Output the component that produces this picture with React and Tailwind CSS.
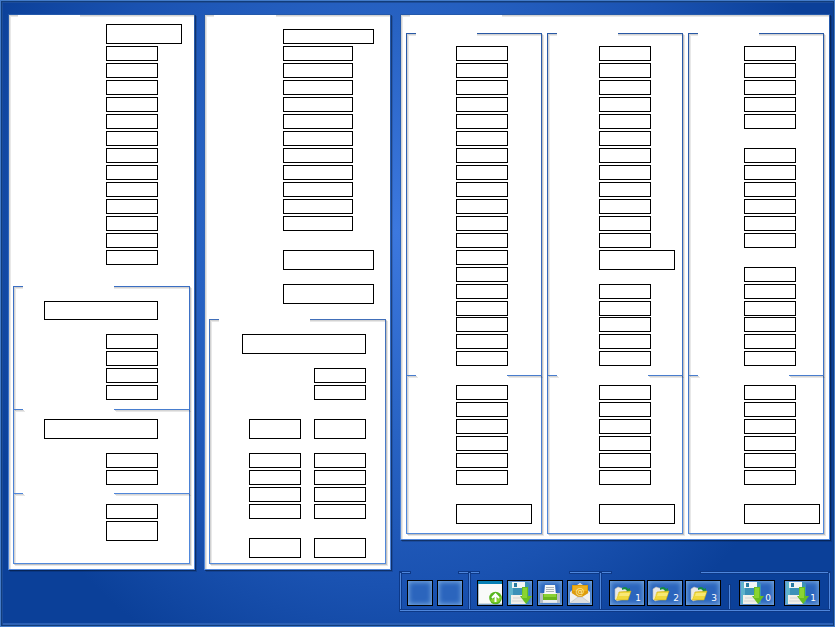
import React from "react";

const box = "shrink-0 border border-black bg-white";

function Field({ className }) {
  return <div className={`${box} ${className}`} />;
}

function Fields({ n, className = "", size = "w-[52px]" }) {
  return (
    <div className={`flex flex-col gap-[2px] ${className}`}>
      {Array.from({ length: n }, (_, i) => (
        <div key={i} className={`${box} h-[15px] ${size}`} />
      ))}
    </div>
  );
}

function Panel({ className, notch, children }) {
  return (
    <section
      className={`relative shrink-0 bg-linear-to-b from-[#2459ab] via-[#2e68c2] to-[#5087dc] p-px shadow-[1px_1px_0_#00000055,2px_2px_0_#00000022] ${className}`}
    >
      <div className="h-full bg-white shadow-[inset_1px_1px_0_#d2d2d2,inset_2px_2px_0_#e8e8e8]">{children}</div>
      <div className={`absolute left-[10px] top-px h-[2px] bg-white ${notch}`} />
    </section>
  );
}

function Group({ className, notch, children }) {
  return (
    <section
      className={`relative shrink-0 bg-linear-to-b to-[#5189dc] p-px shadow-[1px_1px_0_#0000002a,2px_2px_0_#00000018] ${className}`}
    >
      <div className="flex h-full flex-col bg-white shadow-[inset_1px_1px_0_#d2d2d2,inset_2px_2px_0_#e8e8e8]">{children}</div>
      <div className={`absolute left-[10px] top-0 h-[3px] bg-white ${notch}`} />
    </section>
  );
}

function Divider({ className, color = "bg-[#487dce]" }) {
  const line = `h-px ${color} shadow-[1px_1px_0_#0000002a,2px_2px_0_#00000018]`;
  return (
    <div className={`flex shrink-0 ${className}`}>
      <div className={`w-[9px] ${line}`} />
      <div className="w-[91px]" />
      <div className={`flex-1 ${line}`} />
    </div>
  );
}

function Totals({ indent }) {
  return (
    <div className={indent}>
      <Fields n={6} className="mt-[9px]" />
      <Field className="mt-[19px] h-[20px] w-[76px]" />
    </div>
  );
}

function Button({ wide, digit, children }) {
  return (
    <button
      className={`relative h-[26px] shrink-0 border border-black bg-[#2b65bd] shadow-[inset_0_0_5px_1px_#78a9df] ${wide ? "w-[36px]" : "w-[26px]"}`}
    >
      {children}
      {digit !== undefined && (
        <span className="absolute bottom-[2px] right-[3px] font-['DejaVu_Sans',sans-serif] text-[9px] leading-[9px] text-white">
          {digit}
        </span>
      )}
    </button>
  );
}

const svgClass = "absolute left-0 top-0";

function UploadIcon() {
  return (
    <svg className={svgClass} width="24" height="24" viewBox="0 0 24 24">
      <rect width="24" height="23" fill="#f9faf9" />
      <path d="M0 0h24v3H0z" fill="#0780b5" />
      <path d="M.5 3v20H24" stroke="#a6bdca" fill="none" />
      <circle cx="17.5" cy="17" r="6.3" fill="#55b51e" />
      <path d="M12 19c4-2 8 0 11-4a6 6 0 0 1-11 4" fill="#88d12c" />
      <path d="M17.5 21v-7M14 17l3.5-3.7L21 17" stroke="white" strokeWidth="2" fill="none" />
    </svg>
  );
}

function DiskIcon() {
  return (
    <svg className={svgClass} width="24" height="24" viewBox="0 0 24 24">
      <path d="M1 1h18l2 2v20H1z" fill="#3b91b8" />
      <path d="M1 1h4v22H1z" fill="#5eb2cc" />
      <path d="M4 1h13v6H4z" fill="#f2f5f6" />
      <path d="M6 2h3v4H6z" fill="#287ba3" />
      <path d="M3 14h15v9H3z" fill="#f2f0e9" />
      <path d="M5 17h12M4 20h13" stroke="#d3d4d4" />
      <path d="M14 6h6v9h4l-6 8-6-8h2z" fill="#67bd20" />
      <path d="M15 7h4v10h-5" fill="#8ad431" />
    </svg>
  );
}

function PrinterIcon() {
  return (
    <svg className={svgClass} width="24" height="24" viewBox="0 0 24 24">
      <path d="M3 12h18v10H3z" fill="#dee2e3" />
      <path d="M2 12h3v10H2zM19 12h3v10h-3z" fill="#b7bfc6" />
      <path d="M7 4h10l1 10H6z" fill="#f7f8f7" />
      <path d="M8 6.5h8M8 8.5h8M8 10.5h8" stroke="#aab2b8" />
      <path d="M5 13h14v6H5z" fill="#69b51e" />
      <path d="M6 13h12v3H6z" fill="#8bd134" />
      <path d="M5 20h14" stroke="#f8f8f8" />
    </svg>
  );
}

function MailIcon() {
  return (
    <svg className={svgClass} width="24" height="24" viewBox="0 0 24 24">
      <path d="M2 11 12 2l10 9v11H2z" fill="#d9dadb" />
      <path d="M4 4h16v11l-8 4-8-4z" fill="#dd9b0b" />
      <path d="M5 5h14v5H5z" fill="#edaf1e" />
      <path d="M9 4l3-2 3 2z" fill="#d9dadb" />
      <text x="12" y="12.5" textAnchor="middle" fill="#fff0b0" fontSize="9" fontFamily="DejaVu Sans">@</text>
      <path d="M2 11l8 5h4l8-5v11H2z" fill="#f0f0ef" />
      <path d="M2 22l8-6h4l8 6" fill="#dedfdf" stroke="#bbbcbd" strokeWidth=".6" />
    </svg>
  );
}

function FolderIcon() {
  return (
    <svg className={svgClass} width="24" height="24" viewBox="0 0 24 24">
      <path d="M5 8l3-2 3 1 6 1v9L7 20l-2-2z" fill="#e9e9e7" stroke="#bcbcb8" strokeWidth=".6" />
      <path d="M12 7c3-2 5-1 6 1l2-1v5h-5l2-2c-1-2-3-2-5-1z" fill="#168d43" />
      <path d="M9 11l12-1-3 9H6z" fill="#f0d83c" stroke="#c9ad1d" strokeWidth=".6" />
      <path d="M10 12h10l-1 3H9z" fill="#f8e875" />
      <path d="M5 18l4-7-3 8" fill="#fbf2ae" />
    </svg>
  );
}

const edge = "bg-[#4e86dc] shadow-[0_0_0_1px_#0d3988]";

function Toolbar() {
  return (
    <div className="mt-[32px] flex h-[39px] w-[430px] flex-col">
      <div className="flex h-px">
        <div className={`w-[10px] ${edge}`} />
        <div className="w-[49px]" />
        <div className={`w-[20px] ${edge}`} />
        <div className="w-[91px]" />
        <div className={`w-[41px] ${edge}`} />
        <div className="w-[90px]" />
        <div className={`flex-1 ${edge}`} />
      </div>
      <div className="flex h-[37px]">
        <div className={`w-px ${edge}`} />
        <div className="flex w-[68px] gap-[4px] pl-[6px] pt-[7px]">
          <Button />
          <Button />
        </div>
        <div className={`w-px ${edge}`} />
        <div className="flex w-[130px] gap-[4px] pl-[7px] pt-[7px]">
          <Button><UploadIcon /></Button>
          <Button><DiskIcon /></Button>
          <Button><PrinterIcon /></Button>
          <Button><MailIcon /></Button>
        </div>
        <div className={`w-px ${edge}`} />
        <div className="flex w-[128px] gap-[2px] pl-[8px] pt-[7px]">
          <Button wide digit="1"><FolderIcon /></Button>
          <Button wide digit="2"><FolderIcon /></Button>
          <Button wide digit="3"><FolderIcon /></Button>
        </div>
        <div className={`mt-[12px] w-px ${edge}`} />
        <div className="flex w-[99px] gap-[9px] pl-[9px] pt-[7px]">
          <Button wide digit="0"><DiskIcon /></Button>
          <Button wide digit="1"><DiskIcon /></Button>
        </div>
        <div className={`w-px ${edge}`} />
      </div>
      <div className={`h-px ${edge}`} />
    </div>
  );
}

export default function App() {
  return (
    <main className="h-[627px] w-[835px] overflow-hidden border border-[#427bca] bg-[#0b4099] bg-[radial-gradient(ellipse_450px_480px_at_395px_230px,#3c78df_0%,#2863c4_42%,#1a52b1_74%,#0b4099_100%)] shadow-[inset_1px_1px_0_#123d7a,inset_-1px_-1px_0_#123d7a,inset_2px_2px_0_#1d4d9b,inset_0_-3px_0_#2b60b5]">
      <div className="flex gap-[9px] pl-[7px] pt-[13px]">
        <Panel className="h-[556px] w-[187px]" notch="w-[62px]">
          <div className="pl-[97px] pt-[9px]">
            <Field className="h-[20px] w-[76px]" />
            <Fields n={13} className="mt-[2px]" />
          </div>
          <Group className="ml-[4px] mt-[21px] h-[278px] w-[177px] from-[#3a6ec3]" notch="w-[91px]">
            <Field className="ml-[30px] mt-[14px] h-[19px] w-[114px]" />
            <Fields n={4} className="ml-[92px] mt-[14px]" />
            <Divider className="mt-[9px]" />
            <Field className="ml-[30px] mt-[9px] h-[20px] w-[114px]" />
            <Fields n={2} className="ml-[92px] mt-[14px]" />
            <Divider className="mt-[8px]" color="bg-[#5087da]" />
            <Field className="ml-[92px] mt-[10px] h-[15px] w-[52px]" />
            <Field className="ml-[92px] mt-[2px] h-[20px] w-[52px]" />
          </Group>
        </Panel>

        <Panel className="h-[556px] w-[187px]" notch="w-[62px]">
          <div className="pl-[78px] pt-[14px]">
            <Field className="h-[15px] w-[91px]" />
            <Fields n={11} size="w-[70px]" className="mt-[2px]" />
            <Field className="mt-[19px] h-[20px] w-[91px]" />
            <Field className="mt-[14px] h-[20px] w-[91px]" />
          </div>
          <Group className="ml-[4px] mt-[15px] h-[245px] w-[177px] from-[#416fb9]" notch="w-[91px]">
            <Field className="ml-[32px] mt-[14px] h-[20px] w-[124px]" />
            <Fields n={2} className="ml-[104px] mt-[14px]" />
            <div className="ml-[39px] flex gap-[13px]">
              {[0, 1].map((i) => (
                <div key={i}>
                  <Field className="mt-[19px] h-[20px] w-[52px]" />
                  <Fields n={4} className="mt-[14px]" />
                  <Field className="mt-[19px] h-[20px] w-[52px]" />
                </div>
              ))}
            </div>
          </Group>
        </Panel>

        <div className="flex flex-col">
          <Panel className="h-[526px] w-[430px]" notch="w-[92px]">
            <div className="flex gap-[5px] pl-[5px] pt-[18px]">
              <Group className="h-[501px] w-[136px] from-[#2858a5] via-[#3567bb]" notch="w-[61px]">
                <div className="pl-[49px] pt-[12px]">
                  <Fields n={16} />
                  <Fields n={3} className="mt-px" />
                </div>
                <Divider className="mt-[9px]" />
                <Totals indent="pl-[49px]" />
              </Group>
              <Group className="h-[501px] w-[136px] from-[#2858a5] via-[#3567bb]" notch="w-[61px]">
                <div className="pl-[51px] pt-[12px]">
                  <Fields n={12} />
                  <Field className="mt-[2px] h-[20px] w-[76px]" />
                  <Fields n={2} className="mt-[14px]" />
                  <Fields n={3} className="mt-px" />
                </div>
                <Divider className="mt-[9px]" />
                <Totals indent="pl-[51px]" />
              </Group>
              <Group className="h-[501px] w-[136px] from-[#2858a5] via-[#3567bb]" notch="w-[61px]">
                <div className="pl-[55px] pt-[12px]">
                  <Fields n={5} />
                  <Fields n={6} className="mt-[19px]" />
                  <Fields n={3} className="mt-[19px]" />
                  <Fields n={3} className="mt-px" />
                </div>
                <Divider className="mt-[9px]" />
                <Totals indent="pl-[55px]" />
              </Group>
            </div>
          </Panel>
          <Toolbar />
        </div>
      </div>
    </main>
  );
}
